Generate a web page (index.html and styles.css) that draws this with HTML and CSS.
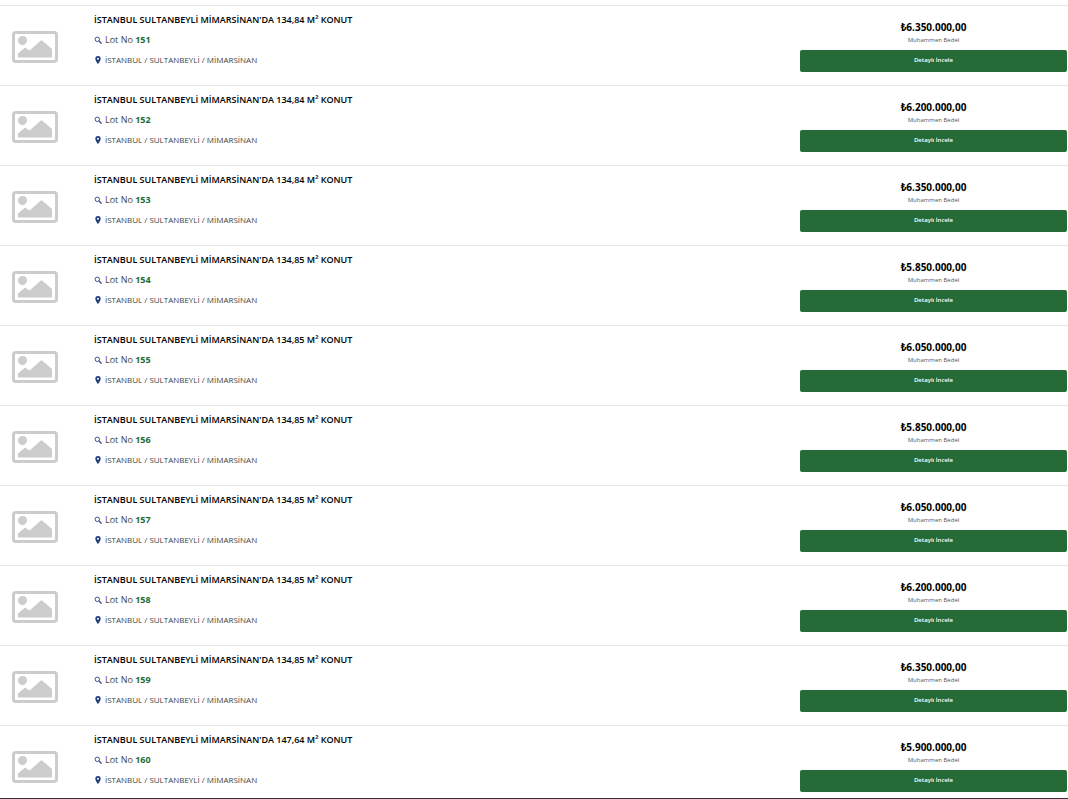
FILE: index.html
```
<!DOCTYPE html>
<html lang="tr">
<head>
    <meta charset="UTF-8">
    <meta name="viewport" content="width=device-width, initial-scale=1.0">
    <title>Lot Listesi</title>
    <link rel="stylesheet" href="styles.css">
</head>
<body>
    <svg class="sprite" aria-hidden="true">
        <symbol id="icon-image" viewBox="0 0 46 32">
            <rect x="1.5" y="1.5" width="43" height="29" rx="2.5" fill="none" stroke="currentColor" stroke-width="3"/>
            <circle cx="10.5" cy="9.5" r="4.5" fill="currentColor"/>
            <path d="M6 26.5v-4l7-6 4.500 3L29.500 9 40 18v8.500z" fill="currentColor"/>
        </symbol>
        <symbol id="icon-search" viewBox="0 0 8 8">
            <circle cx="3.3" cy="3.3" r="2.2" fill="none" stroke="currentColor" stroke-width="0.9"/>
            <path d="M5 5 7.600 7.600" stroke="currentColor" stroke-width="1.2"/>
        </symbol>
        <symbol id="icon-pin" viewBox="0 0 8 8">
            <path fill-rule="evenodd" d="M4 0a2.700 2.700 0 0 0-2.700 2.700C1.300 4.800 4 8 4 8s2.700-3.200 2.700-5.300A2.700 2.700 0 0 0 4 0zm0 1.700a1 1 0 1 1 0 2 1 1 0 0 1 0-2z" fill="currentColor"/>
        </symbol>
    </svg>

    <main id="lots" class="lots"></main>

    <template id="lot-template">
        <article class="lot">
            <div class="lot-image"><svg><use href="#icon-image"/></svg></div>
            <div class="lot-info">
                <h2 class="lot-title"></h2>
                <p class="lot-line"><svg><use href="#icon-search"/></svg><span>Lot No <b class="lot-no"></b></span></p>
                <p class="lot-line lot-place"><svg><use href="#icon-pin"/></svg><span>İSTANBUL / SULTANBEYLİ / MİMARSİNAN</span></p>
            </div>
            <div class="lot-price">
                <strong class="price"></strong>
                <span class="price-label">Muhammen Bedel</span>
                <button type="button" class="detail-button">Detaylı İncele</button>
            </div>
        </article>
    </template>

    <script src="script.js"></script>
</body>
</html>
```
FILE: styles.css
```
* {
    box-sizing: border-box;
}
body {
    margin: 0;
    padding-top: 5px;
    font-family: "Open Sans", "Noto Sans", sans-serif;
    background-color: #ffffff;
    color: #000000;
}
h2, p {
    margin: 0;
}
.sprite {
    display: none;
}
.lots {
    border-bottom: 1px solid #303236;
}
.lot {
    display: grid;
    grid-template-columns: 94px 1fr calc(25% + 1px);
    border-top: 1px solid #e9e9e9;
    padding-bottom: 13px;
}
.lot:last-child {
    padding-bottom: 6px;
}
.lot-image {
    padding: 25px 0 0 12px;
    color: #cccccc;
}
.lot-image svg {
    display: block;
    width: 46px;
    height: 32px;
}
.lot-info {
    padding-top: 4px;
    line-height: 20px;
}
.lot-title {
    font-size: 9px;
    font-weight: 600;
}
.lot-line {
    display: flex;
    align-items: center;
    gap: 3px;
    font-size: 9px;
    color: #444444;
}
.lot-line svg {
    width: 8px;
    height: 8px;
    color: #23407f;
}
.lot-place {
    font-size: 8px;
}
.lot-no {
    color: #256b37;
}
.lot-price {
    display: flex;
    flex-direction: column;
    align-items: center;
    padding: 11px 1px 0 0;
}
.price {
    font-size: 10px;
    font-weight: 700;
    line-height: 20px;
}
.price-label {
    font-size: 6px;
    line-height: 6px;
    color: #555555;
}
.detail-button {
    width: 100%;
    height: 22px;
    margin-top: 7px;
    padding: 0 0 2px;
    border: 0;
    border-radius: 2px;
    background-color: #256b37;
    color: #ffffff;
    font-family: inherit;
    font-size: 6px;
    font-weight: 600;
}
```
FILE: script.js
```
const lots = [
    { no: 151, area: '134,84', price: '6.350.000,00' },
    { no: 152, area: '134,84', price: '6.200.000,00' },
    { no: 153, area: '134,84', price: '6.350.000,00' },
    { no: 154, area: '134,85', price: '5.850.000,00' },
    { no: 155, area: '134,85', price: '6.050.000,00' },
    { no: 156, area: '134,85', price: '5.850.000,00' },
    { no: 157, area: '134,85', price: '6.050.000,00' },
    { no: 158, area: '134,85', price: '6.200.000,00' },
    { no: 159, area: '134,85', price: '6.350.000,00' },
    { no: 160, area: '147,64', price: '5.900.000,00' }
];

const list = document.getElementById('lots');
const template = document.getElementById('lot-template');

lots.forEach(lot => {
    const row = template.content.cloneNode(true);
    row.querySelector('.lot-title').textContent = `İSTANBUL SULTANBEYLİ MİMARSİNAN'DA ${lot.area} M² KONUT`;
    row.querySelector('.lot-no').textContent = lot.no;
    row.querySelector('.price').textContent = '₺' + lot.price;
    list.appendChild(row);
});
```
